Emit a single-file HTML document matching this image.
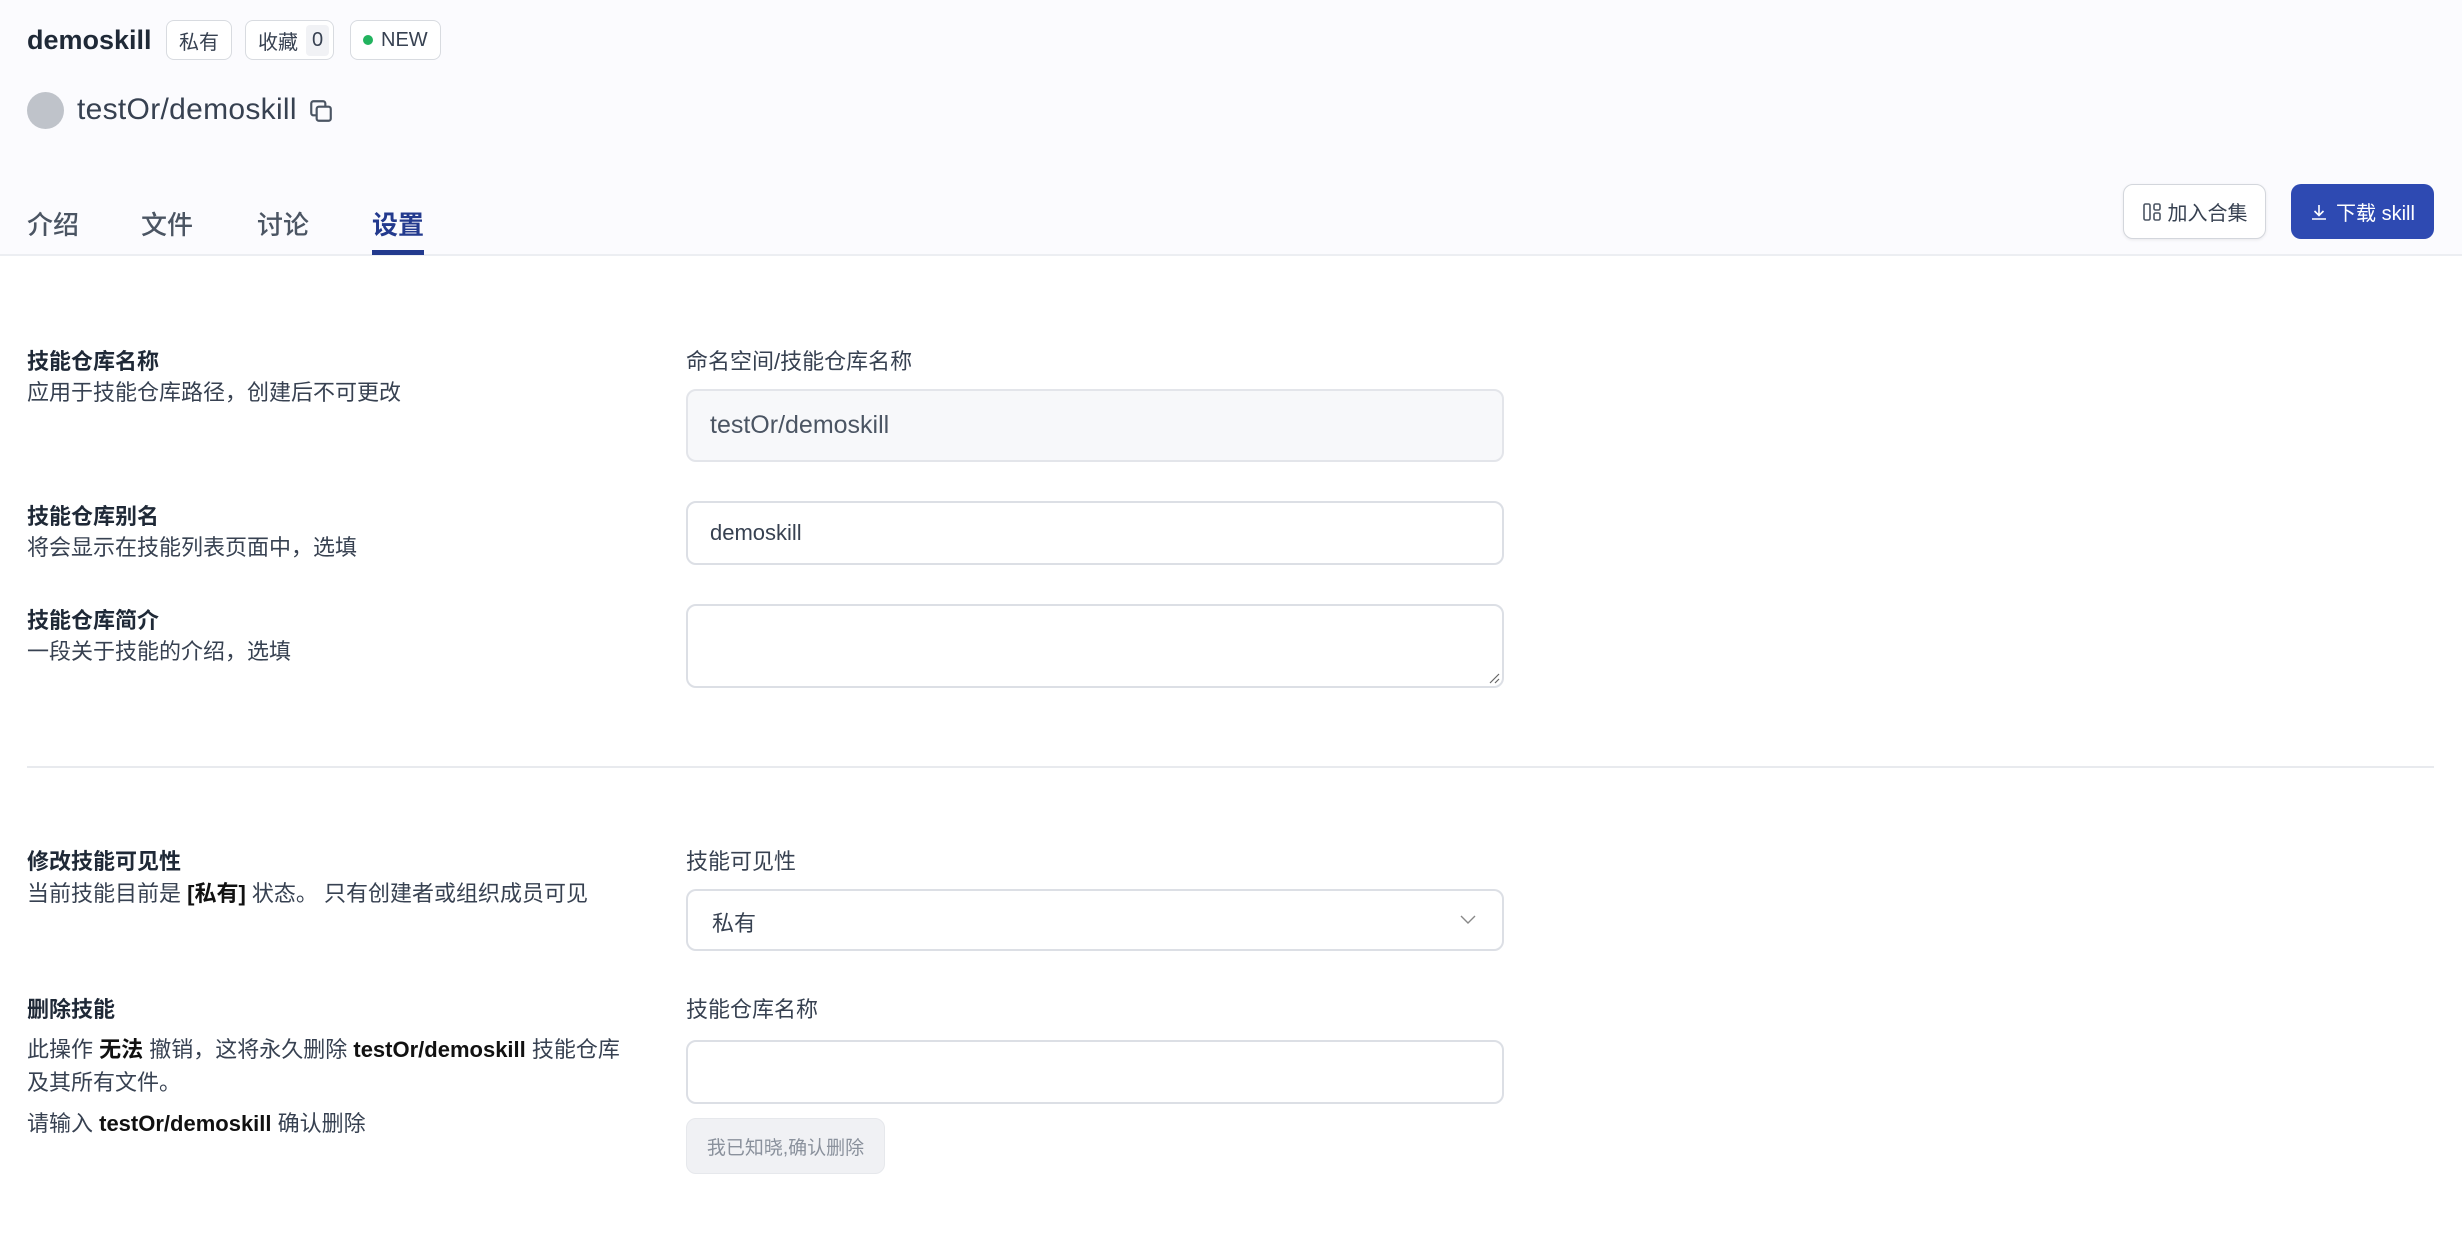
<!DOCTYPE html>
<html><head><meta charset="utf-8"><style>
*{box-sizing:border-box;margin:0;padding:0}
body{width:2462px;height:1258px;background:#fff;font-family:"Liberation Sans","Noto Sans CJK SC",sans-serif;color:#1f2937;position:relative;overflow:hidden}
.a{position:absolute;white-space:nowrap}
.hdr{position:absolute;left:0;top:0;width:2462px;height:256px;background:#fbfbfe;border-bottom:2px solid #eceef2}
.badge{position:absolute;top:20px;height:40px;border:1.5px solid #d8dbe0;border-radius:8px;background:#fff;font-size:20px;display:flex;align-items:center;padding:0 12px;color:#374151}
.tab{position:absolute;top:205px;font-size:26px;color:#4b5563;font-weight:500}
.lbl{font-size:22px;font-weight:700;color:#1f2937}
.desc{font-size:22px;color:#374151}
.rl{font-size:22px;color:#374151}
.inp{position:absolute;left:686px;width:818px;border:2px solid #dcdfe5;border-radius:10px;background:#fff}
b{color:#111}
</style></head><body>
<div class="hdr"></div>
<div class="a" style="left:27px;top:25px;font-size:27px;font-weight:700;color:#1f2937">demoskill</div>
<div class="badge" style="left:166px">私有</div>
<div class="badge" style="left:245px;padding-right:4px">收藏<span style="background:#f1f2f5;margin-left:8px;padding:4px 6px;border-radius:4px">0</span></div>
<div class="badge" style="left:350px"><span style="width:10px;height:10px;border-radius:50%;background:#22b35e;margin-right:8px;display:inline-block"></span>NEW</div>
<div class="a" style="left:27px;top:92px;width:37px;height:37px;border-radius:50%;background:#bfc3ca"></div>
<div class="a" style="left:77px;top:93px;font-size:30px;letter-spacing:0.3px;color:#374151">testOr/demoskill</div>
<svg class="a" style="left:308px;top:98px" width="26" height="26" viewBox="0 0 24 24" fill="none" stroke="#4b5563" stroke-width="2"><rect x="8" y="8" width="13" height="13" rx="2"/><path d="M16 8V5a2 2 0 0 0-2-2H5a2 2 0 0 0-2 2v9a2 2 0 0 0 2 2h3"/></svg>
<div class="tab" style="left:27px">介绍</div>
<div class="tab" style="left:141px">文件</div>
<div class="tab" style="left:257px">讨论</div>
<div class="tab" style="left:372px;color:#233a8e;font-weight:700">设置</div>
<div class="a" style="left:372px;top:250px;width:52px;height:5px;background:#233a8e"></div>
<div class="a" style="left:2123px;top:184px;width:143px;height:55px;border:1.5px solid #d3d6dc;border-radius:10px;background:#fff;display:flex;align-items:center;justify-content:center;font-size:20px;color:#374151;box-shadow:0 1px 3px rgba(0,0,0,.08)"><svg width="20" height="20" viewBox="0 0 20 20" fill="none" stroke="#4b5563" stroke-width="1.6" style="margin-right:6px"><rect x="2" y="2" width="6" height="16" rx="1.5"/><rect x="12" y="2" width="6" height="6" rx="1.5"/><rect x="12" y="11" width="6" height="7" rx="1.5"/></svg>加入合集</div>
<div class="a" style="left:2291px;top:184px;width:143px;height:55px;border-radius:10px;background:#2e4ab2;display:flex;align-items:center;justify-content:center;font-size:20px;color:#fff"><svg width="18" height="18" viewBox="0 0 18 18" fill="none" stroke="#fff" stroke-width="1.6" style="margin-right:8px"><path d="M9 2v10M4.5 8l4.5 4.5L13.5 8M2 16h14"/></svg>下载 skill</div>

<div class="a lbl" style="left:27px;top:344px">技能仓库名称</div>
<div class="a desc" style="left:27px;top:375px">应用于技能仓库路径，创建后不可更改</div>
<div class="a rl" style="left:686px;top:344px">命名空间/技能仓库名称</div>
<div class="inp" style="top:389px;height:73px;background:#f7f8fa;border-color:#e3e5ea"><span class="a" style="left:22px;top:20px;font-size:25px;color:#4b5563">testOr/demoskill</span></div>

<div class="a lbl" style="left:27px;top:499px">技能仓库别名</div>
<div class="a desc" style="left:27px;top:530px">将会显示在技能列表页面中，选填</div>
<div class="inp" style="top:501px;height:64px"><span class="a" style="left:22px;top:17px;font-size:22px;color:#374151">demoskill</span></div>

<div class="a lbl" style="left:27px;top:603px">技能仓库简介</div>
<div class="a desc" style="left:27px;top:634px">一段关于技能的介绍，选填</div>
<div class="inp" style="top:604px;height:84px"><svg class="a" style="right:2px;bottom:2px" width="12" height="12"><path d="M11 2L2 11M11 7L7 11" stroke="#666" stroke-width="1.2"/></svg></div>

<div class="a" style="left:27px;top:766px;width:2407px;height:2px;background:#e8eaee"></div>

<div class="a lbl" style="left:27px;top:844px">修改技能可见性</div>
<div class="a desc" style="left:27px;top:876px">当前技能目前是 <b>[私有]</b> 状态。 只有创建者或组织成员可见</div>
<div class="a rl" style="left:686px;top:844px">技能可见性</div>
<div class="inp" style="top:889px;height:62px"><span class="a" style="left:24px;top:15px;font-size:22px;color:#374151">私有</span><svg class="a" style="right:26px;top:24px" width="16" height="10" viewBox="0 0 16 10" fill="none" stroke="#888" stroke-width="1.4"><path d="M1 1l7 7 7-7"/></svg></div>

<div class="a lbl" style="left:27px;top:992px">删除技能</div>
<div class="a desc" style="left:27px;top:1032px">此操作 <b>无法</b> 撤销，这将永久删除 <b>testOr/demoskill</b> 技能仓库</div>
<div class="a desc" style="left:27px;top:1065px">及其所有文件。</div>
<div class="a desc" style="left:27px;top:1106px">请输入 <b>testOr/demoskill</b> 确认删除</div>
<div class="a rl" style="left:686px;top:992px">技能仓库名称</div>
<div class="inp" style="top:1040px;height:64px"></div>
<div class="a" style="left:686px;top:1118px;width:199px;height:56px;border-radius:10px;background:#f0f1f4;border:1.5px solid #e6e8ec;font-size:19px;color:#8a919c;display:flex;align-items:center;justify-content:center">我已知晓,确认删除</div>
</body></html>
